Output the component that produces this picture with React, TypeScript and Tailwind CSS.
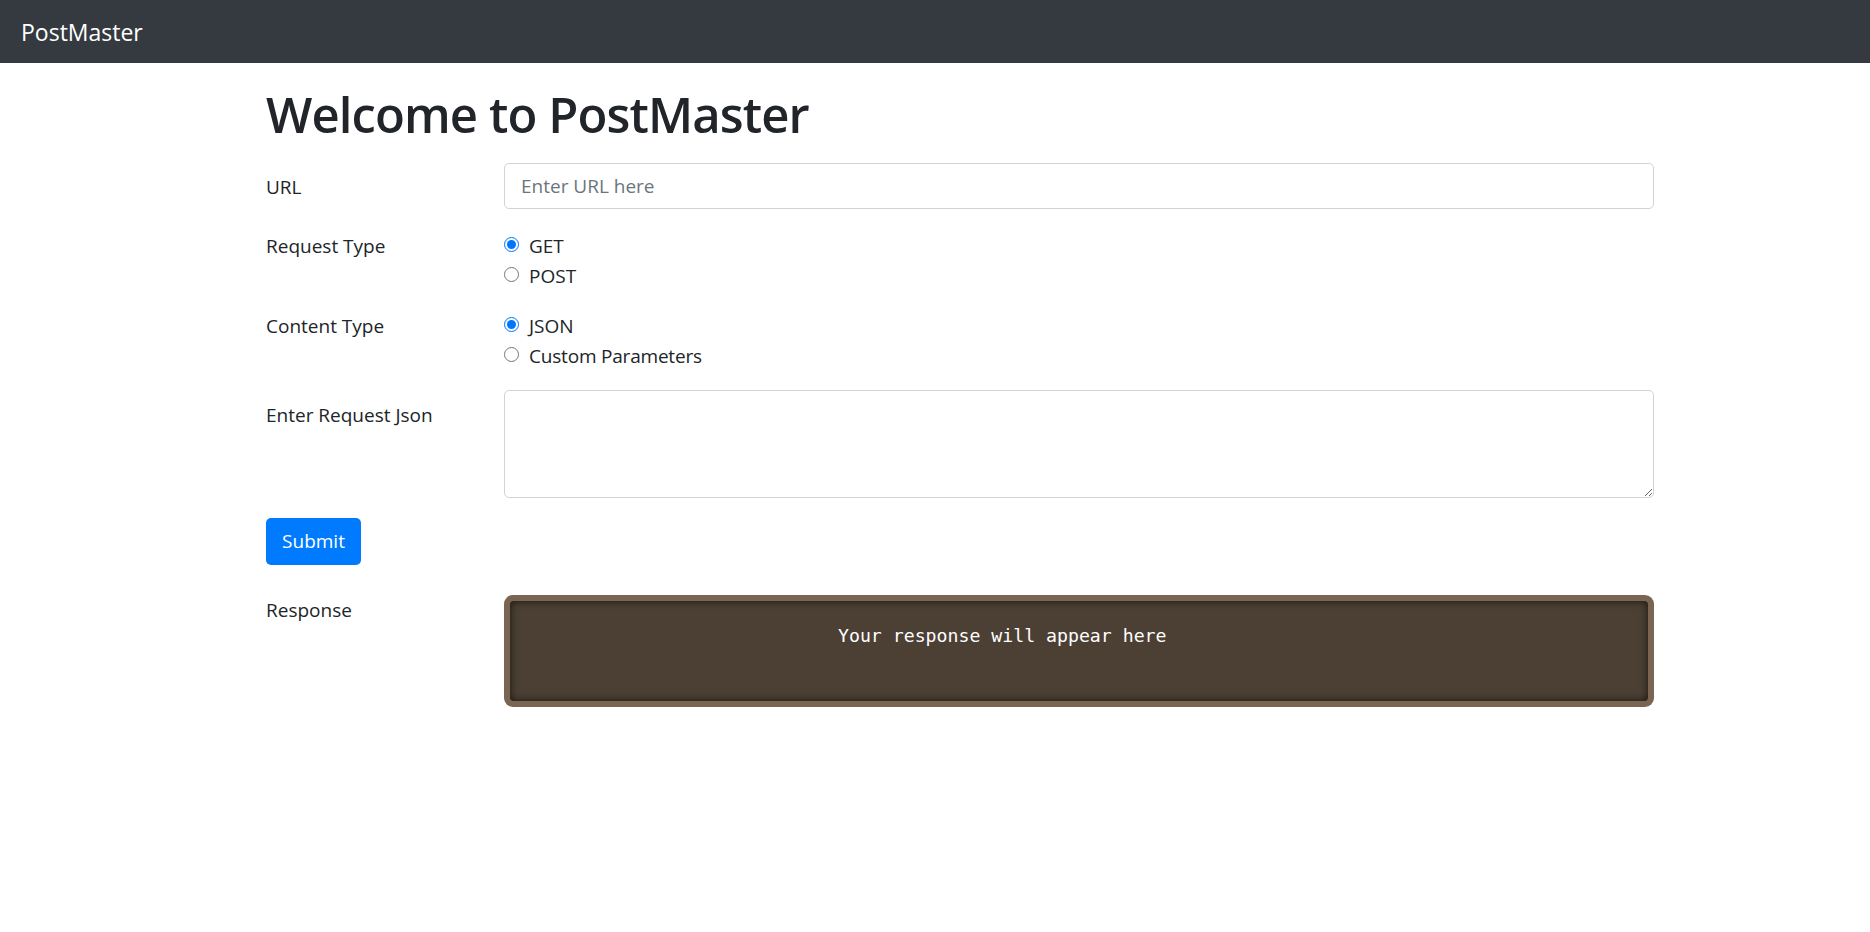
import React from "react";

export default function App() {
  return (
    <div className="min-h-[932px] w-full bg-white text-[#212529] font-['Open_Sans',_'Noto_Sans',_sans-serif]">
      <nav className="flex h-[63px] items-center bg-[#343a40] pl-[21px]">
        <span className="text-[23px] leading-[30px] text-white">PostMaster</span>
      </nav>

      <main className="pl-[266px]">
        <h1 className="mt-[21px] text-[49px] font-semibold leading-[60px] tracking-[-0.9px] text-[#212529]">
          Welcome to PostMaster
        </h1>

        <div className="mt-[19px] flex w-[1388px] items-start">
          <label className="w-[238px] shrink-0 pt-[9px] text-[19px] leading-[30px]">URL</label>
          <input
            type="text"
            placeholder="Enter URL here"
            className="h-[46px] w-[1150px] rounded-[5px] border border-[#ced4da] bg-white px-[16px] text-[19px] text-[#495057] outline-none placeholder:text-[#6c757d]"
          />
        </div>

        <div className="mt-[22px] flex w-[1388px] items-start">
          <label className="w-[238px] shrink-0 text-[19px] leading-[30px]">Request Type</label>
          <div className="flex flex-col">
            <label className="flex h-[30px] items-center gap-[10px] text-[19px] leading-[30px]">
              <input type="radio" name="rt" defaultChecked className="m-0 h-[15px] w-[15px] -translate-y-[2px]" />
              GET
            </label>
            <label className="flex h-[30px] items-center gap-[10px] text-[19px] leading-[30px]">
              <input type="radio" name="rt" className="m-0 h-[15px] w-[15px] -translate-y-[2px]" />
              POST
            </label>
          </div>
        </div>

        <div className="mt-[20px] flex w-[1388px] items-start">
          <label className="w-[238px] shrink-0 text-[19px] leading-[30px]">Content Type</label>
          <div className="flex flex-col">
            <label className="flex h-[30px] items-center gap-[10px] text-[19px] leading-[30px]">
              <input type="radio" name="ct" defaultChecked className="m-0 h-[15px] w-[15px] -translate-y-[2px]" />
              JSON
            </label>
            <label className="flex h-[30px] items-center gap-[10px] text-[19px] leading-[30px] tracking-[-0.2px]">
              <input type="radio" name="ct" className="m-0 h-[15px] w-[15px] -translate-y-[2px]" />
              Custom Parameters
            </label>
          </div>
        </div>

        <div className="mt-[19px] flex w-[1388px] items-start">
          <label className="w-[238px] shrink-0 pt-[10px] text-[19px] leading-[30px]">Enter Request Json</label>
          <textarea
            rows={3}
            className="block h-[108px] w-[1150px] rounded-[5px] border border-[#ced4da] bg-white px-[16px] py-[8px] text-[19px] outline-none"
          />
        </div>

        <button
          type="button"
          className="mt-[20px] flex h-[47px] w-[95px] items-center justify-center rounded-[5px] bg-[#007bff] text-[19px] text-white"
        >
          Submit
        </button>

        <div className="mt-[30px] flex w-[1388px] items-start">
          <label className="w-[238px] shrink-0 text-[19px] leading-[30px]">Response</label>
          <div className="h-[112px] w-[1150px] rounded-[9px] bg-[#7a6552] p-[6px]">
            <div className="h-full w-full rounded-[4px] bg-[#4c4034] pl-[328px] pt-[21px] shadow-[inset_0_0_8px_rgba(0,0,0,0.7)]">
              <pre className="m-0 font-['DejaVu_Sans_Mono',_'Liberation_Mono',_monospace] text-[18.2px] leading-[27px] text-white">
                Your response will appear here
              </pre>
            </div>
          </div>
        </div>
      </main>
    </div>
  );
}
